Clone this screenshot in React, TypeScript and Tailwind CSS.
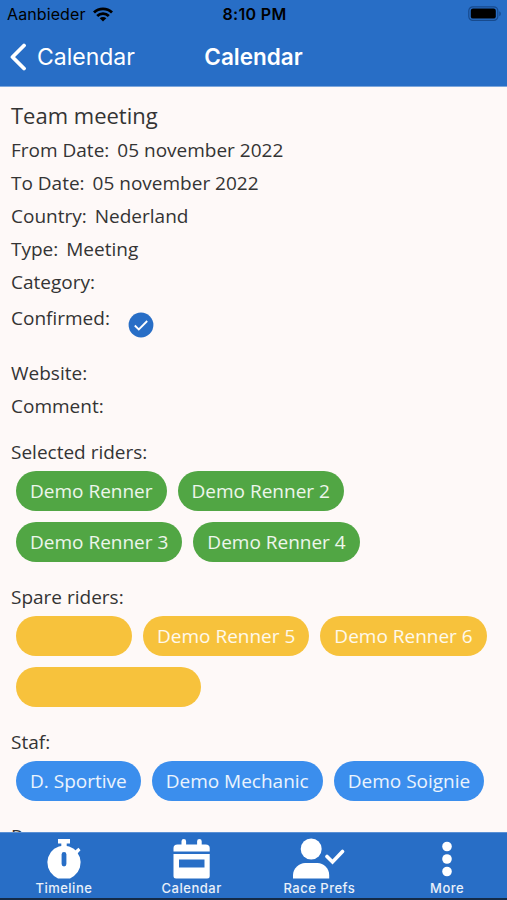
import type { ReactNode } from "react"

const details = [
  { label: "From Date:", value: "05 november 2022" },
  { label: "To Date:", value: "05 november 2022" },
  { label: "Country:", value: "Nederland" },
  { label: "Type:", value: "Meeting" },
  { label: "Category:", value: "" },
]

function StatusBar() {
  return (
    <div className="grid grid-cols-3 items-center h-7 pl-[7px] pr-[5px] text-black">
      <div className="flex items-center gap-[7px]">
        <span className="text-[16px] tracking-[0.1px]">Aanbieder</span>
        <svg width="20" height="15" viewBox="0 0 20 15" fill="none" stroke="currentColor" strokeWidth="2.8">
          <path d="M1 5.6a12.8 12.8 0 0 1 18 0" />
          <path d="M4.2 9a8.2 8.2 0 0 1 11.6 0" />
          <path d="M10 14.6 6.7 11.3a4.7 4.7 0 0 1 6.6 0z" fill="currentColor" stroke="none" />
        </svg>
      </div>
      <span className="text-center text-[16px] font-semibold tracking-[0.3px]">8:10 PM</span>
      <svg className="justify-self-end" width="34" height="16" viewBox="0 0 34 16">
        <rect x="0.8" y="0.8" width="29" height="13.6" rx="4" fill="none" stroke="#174a8d" strokeWidth="1.2" />
        <rect x="2.8" y="2.6" width="25" height="10" rx="2.2" fill="#000" />
        <path d="M31.3 5.2v5c2-.8 2-4.2 0-5z" fill="#174a8d" />
      </svg>
    </div>
  )
}

function Section({ title, children }: { title: string; children?: ReactNode }) {
  return (
    <section className="mb-[19px]">
      <h2 className="leading-[33px] mb-[2px]">{title}</h2>
      <div className="flex flex-wrap gap-x-[11px] gap-y-[11px] pl-[5px]">{children}</div>
    </section>
  )
}

function Chip({ className, children }: { className: string; children?: ReactNode }) {
  return (
    <span className={`flex items-center h-10 px-[14px] rounded-full text-white/90 whitespace-nowrap ${className}`}>
      {children}
    </span>
  )
}

function Tab({ label, children }: { label: string; children: ReactNode }) {
  return (
    <div className="flex flex-col items-center w-32">
      <svg width="52" height="42" viewBox="0 0 52 42" className="mt-[5px]" fill="#fff">
        {children}
      </svg>
      <span className="text-[13px] leading-4 font-medium tracking-[0.5px]">{label}</span>
    </div>
  )
}

export default function App() {
  return (
    <div className="flex flex-col h-[900px] w-[507px] overflow-hidden bg-[#fef9f8] font-['Open_Sans',sans-serif] text-[19px] text-[#343434]">
      <header className="shrink-0 h-[87px] bg-[#286ec6] border-b border-[#7da7dc] text-white font-['Inter',sans-serif]">
        <StatusBar />
        <div className="grid grid-cols-3 items-center h-[58px] pl-[9px] pr-[9px]">
          <div className="flex items-center gap-[11px] text-[23px]">
            <svg width="17" height="28" viewBox="0 0 17 28" fill="none" stroke="#fff" strokeWidth="3.8">
              <path d="M15 2.5 3.5 14 15 25.5" strokeLinecap="round" strokeLinejoin="round" />
            </svg>
            <span>Calendar</span>
          </div>
          <h1 className="text-center text-[22.5px] font-semibold">Calendar</h1>
        </div>
      </header>

      <main className="flex-1 min-h-0 overflow-hidden pt-[9px] pl-[11px]">
        <h2 className="text-[22px] leading-[38px]">Team meeting</h2>
        {details.map((item) => (
          <div key={item.label} className="flex gap-2 h-[33px] leading-[33px]">
            <span>{item.label}</span>
            <span>{item.value}</span>
          </div>
        ))}
        <div className="flex gap-[18px] h-[58px] pt-[3px] leading-[33px]">
          <span>Confirmed:</span>
          <svg className="mt-[10px]" width="26" height="26" viewBox="0 0 26 26" fill="none">
            <circle cx="13" cy="13" r="12.4" fill="#286ec6" />
            <path d="m6.8 13.5 4 4L19.2 9" stroke="#fff" strokeWidth="1.8" />
          </svg>
        </div>
        <div className="leading-[33px]">Website:</div>
        <div className="leading-[33px] mb-[13px]">Comment:</div>

        <Section title="Selected riders:">
          <Chip className="bg-[#51a644]">Demo Renner</Chip>
          <Chip className="bg-[#51a644]">Demo Renner 2</Chip>
          <Chip className="bg-[#51a644]">Demo Renner 3</Chip>
          <Chip className="bg-[#51a644]">Demo Renner 4</Chip>
        </Section>
        <Section title="Spare riders:">
          <Chip className="bg-[#f7c23c] w-[116px]" />
          <Chip className="bg-[#f7c23c]">Demo Renner 5</Chip>
          <Chip className="bg-[#f7c23c]">Demo Renner 6</Chip>
          <Chip className="bg-[#f7c23c] w-[185px]" />
        </Section>
        <Section title="Staf:">
          <Chip className="bg-[#3b8eed]">D. Sportive</Chip>
          <Chip className="bg-[#3b8eed]">Demo Mechanic</Chip>
          <Chip className="bg-[#3b8eed]">Demo Soignie</Chip>
        </Section>
        <Section title="Races:" />
      </main>

      <nav className="shrink-0 flex h-[68px] -mr-1 bg-[#286ec6] border-t border-[#5a90d5] border-b-2 border-b-[#142b48] text-white/90 font-['Inter',sans-serif]">
        <Tab label="Timeline">
          <path d="M20 1h12v4.5h-3.3v4h-5.4v-4H20z" />
          <path d="m35.5 14 5-4.3 2 2.5-4.7 5z" />
          <path d="M26 7.5a17 17 0 0 1 10 30.5l-4 2.5H20L16 38A17 17 0 0 1 26 7.5z" />
          <rect x="23.6" y="14" width="4.8" height="14.5" rx="2.4" fill="#286ec6" />
        </Tab>
        <Tab label="Calendar">
          <path d="M7.5 13.5V10q0-3.5 4-3.5h4V3.2a2.2 2.2 0 0 1 4.6 0v3.3h11V3.2a2.2 2.2 0 0 1 4.6 0v3.3h4q4 0 4 3.5v3.5z" />
          <path d="M7.5 16h36.2v22q0 2.5-2.5 2.5H10q-2.5 0-2.5-2.5zM13 21.5v8h25.5v-8z" fillRule="evenodd" />
        </Tab>
        <Tab label="Race Prefs">
          <circle cx="18.2" cy="11" r="10.5" />
          <path d="M0 40.5V37c0-7 6.5-12 12-12h12.5c6 0 11.700 5 11.700 12v3.500z" />
          <path d="m34 18.500 5.500 5.500L49.500 13.500" fill="none" stroke="#fff" strokeWidth="3.600" strokeLinecap="round" />
        </Tab>
        <Tab label="More">
          <circle cx="26" cy="8.500" r="4.800" />
          <circle cx="26" cy="21" r="4.800" />
          <circle cx="26" cy="33.500" r="4.800" />
        </Tab>
      </nav>
    </div>
  )
}
